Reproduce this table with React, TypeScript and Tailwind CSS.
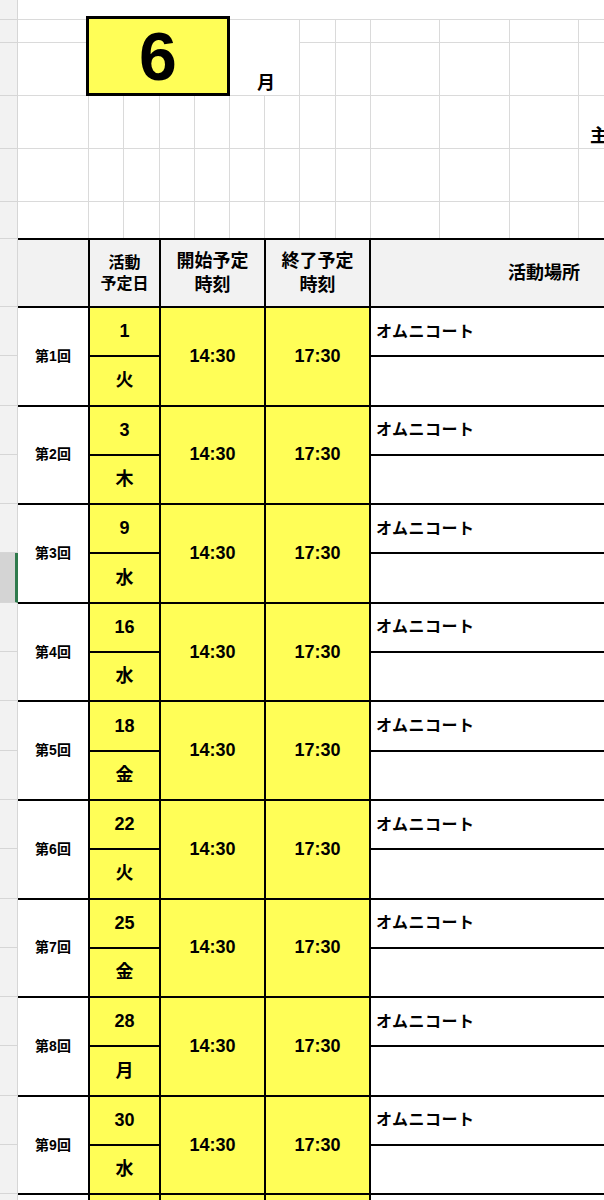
import React from "react";

const rows = [
  { n: 1, d: "1", w: "火" },
  { n: 2, d: "3", w: "木" },
  { n: 3, d: "9", w: "水" },
  { n: 4, d: "16", w: "水" },
  { n: 5, d: "18", w: "金" },
  { n: 6, d: "22", w: "火" },
  { n: 7, d: "25", w: "金" },
  { n: 8, d: "28", w: "月" },
  { n: 9, d: "30", w: "水" },
  { n: 10, d: "", w: "" },
];

const stripTop = [20, 23, 53, 53, 53, 37, 68];

function Strip() {
  return (
    <div className="flex w-[18px] shrink-0 flex-col bg-[#f2f2f2]">
      {stripTop.map((h, i) => (
        <div
          key={"t" + i}
          style={{ height: h }}
          className="box-border shrink-0 border-b border-r border-[#d6d6d6]"
        />
      ))}
      {Array.from({ length: 20 }).map((_, i) => (
        <div
          key={"s" + i}
          className={
            i === 5
              ? "box-border h-[49.3px] shrink-0 border-b border-r-[3px] border-b-[#d6d6d6] border-r-[#2f7a4c] bg-[#d4d4d4]"
              : "box-border h-[49.3px] shrink-0 border-b border-r border-[#d6d6d6]"
          }
        />
      ))}
    </div>
  );
}

function TopGrid() {
  const rest = Array.from({ length: 6 });
  return (
    <div>
      <div className="h-[19px] bg-white" />
      <div className="grid grid-cols-[70px_34px_35px_34px_34px_34px_34px_35px_34px_68px_69px_68px_69px] grid-rows-[22px_52px_52px_52px_36px] gap-px bg-[#dadada] pt-px">
        <div className="bg-white" />
        <div className="col-span-4 row-span-2 -mb-[1px] -ml-[3px] -mr-[1px] -mt-[4px] z-10 flex items-center justify-center border-[3px] border-black bg-[#fffe57]">
          <span className="text-[68px] font-bold leading-none text-black">6</span>
        </div>
        <div className="col-span-2 row-span-2 flex items-end justify-center bg-white pb-[3px] pl-[3px]">
          <span className="text-[18px] font-bold leading-none text-black">月</span>
        </div>
        {rest.map((_, i) => (
          <div key={"r1" + i} className="bg-white" />
        ))}
        <div className="bg-white" />
        {rest.map((_, i) => (
          <div key={"r2" + i} className="bg-white" />
        ))}
        {Array.from({ length: 12 }).map((_, i) => (
          <div key={"r3" + i} className="bg-white" />
        ))}
        <div className="flex items-end bg-white pb-[3px] pl-[11px]">
          <span className="whitespace-nowrap text-[18px] font-bold leading-none text-black">主</span>
        </div>
        {Array.from({ length: 26 }).map((_, i) => (
          <div key={"r4" + i} className="bg-white" />
        ))}
      </div>
    </div>
  );
}

function Table() {
  return (
    <div className="grid grid-cols-[70px_69px_103px_103px_346px] grid-rows-[66px_repeat(20,47.3px)] gap-[2px] bg-black pt-[2px]">
      <div className="bg-[#f2f2f2]" />
      <div className="flex flex-col items-center justify-center bg-[#f2f2f2] text-[16px] font-semibold leading-[21px] text-black">
        <span>活動</span>
        <span>予定日</span>
      </div>
      <div className="flex flex-col items-center justify-center bg-[#f2f2f2] text-[18px] font-semibold leading-[24px] text-black">
        <span>開始予定</span>
        <span>時刻</span>
      </div>
      <div className="flex flex-col items-center justify-center bg-[#f2f2f2] text-[18px] font-semibold leading-[24px] text-black">
        <span>終了予定</span>
        <span>時刻</span>
      </div>
      <div className="flex items-center justify-center bg-[#f2f2f2] text-[18px] font-semibold text-black">
        活動場所
      </div>
      {rows.map((r) => (
        <React.Fragment key={r.n}>
          <div className="row-span-2 flex items-center justify-center bg-white text-[14px] font-bold text-black">
            {r.d ? `第${r.n}回` : ""}
          </div>
          <div className="flex items-center justify-center bg-[#fffe57] text-[18px] font-bold text-black">
            {r.d}
          </div>
          <div className="row-span-2 flex items-center justify-center bg-[#fffe57] text-[18px] font-bold text-black">
            {r.d ? "14:30" : ""}
          </div>
          <div className="row-span-2 flex items-center justify-center bg-[#fffe57] text-[18px] font-bold text-black">
            {r.d ? "17:30" : ""}
          </div>
          <div className="flex items-center bg-white pl-[5px] text-[16px] font-bold tracking-[0.5px] text-black">
            {r.d ? "オムニコート" : ""}
          </div>
          <div className="flex items-center justify-center bg-[#fffe57] text-[18px] font-bold text-black">
            {r.w}
          </div>
          <div className="bg-white" />
        </React.Fragment>
      ))}
    </div>
  );
}

export default function App() {
  return (
    <div className="flex h-[1200px] w-[604px] overflow-hidden bg-white font-['Liberation_Sans','Noto_Sans_CJK_JP',sans-serif]">
      <Strip />
      <div className="flex min-w-0 flex-1 flex-col overflow-hidden">
        <div className="w-[800px]">
          <TopGrid />
          <Table />
        </div>
      </div>
    </div>
  );
}
